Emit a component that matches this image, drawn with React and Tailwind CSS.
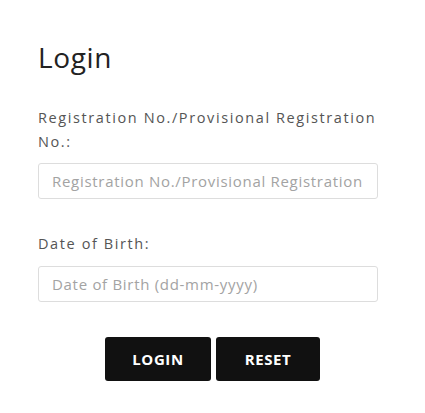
export default function App() {
  return (
    <div className="min-h-[413px] w-[425px] bg-white font-['Open_Sans',sans-serif]">
      <div className="px-[38px] pt-[40px]">
        <h2 className="text-[28px] leading-[34px] font-normal text-[#222] tracking-[0.6px]">Login</h2>
        <form className="mt-[32px]" onSubmit={(e) => e.preventDefault()}>
          <label htmlFor="regno" className="block w-[350px] text-[14.5px] leading-[24px] text-[#555] tracking-[1.6px]">
            Registration No./Provisional Registration No.:
          </label>
          <input
            id="regno"
            type="text"
            placeholder="Registration No./Provisional Registration"
            className="mt-[9px] block w-[340px] h-[36px] px-[13px] text-[15px] tracking-[0.7px] text-[#555] bg-white border border-[#ddd] rounded-[3px] placeholder:text-[#a3a3a3] focus:outline-none"
          />
          <label htmlFor="dob" className="mt-[33px] block text-[14.5px] leading-[24px] text-[#555] tracking-[1.6px]">
            Date of Birth:
          </label>
          <input
            id="dob"
            type="text"
            placeholder="Date of Birth (dd-mm-yyyy)"
            className="mt-[10px] block w-[340px] h-[36px] px-[13px] text-[15px] tracking-[0.7px] text-[#555] bg-white border border-[#ddd] rounded-[3px] placeholder:text-[#a3a3a3] focus:outline-none"
          />
          <div className="mt-[35px] flex gap-[5px] pl-[67px]">
            <button type="submit" className="w-[106px] h-[44px] bg-[#111] text-white text-[15px] font-bold tracking-[0.6px] rounded-[3px]">
              LOGIN
            </button>
            <button type="reset" className="w-[104px] h-[44px] bg-[#111] text-white text-[15px] font-bold tracking-[0.6px] rounded-[3px]">
              RESET
            </button>
          </div>
        </form>
      </div>
    </div>
  );
}
